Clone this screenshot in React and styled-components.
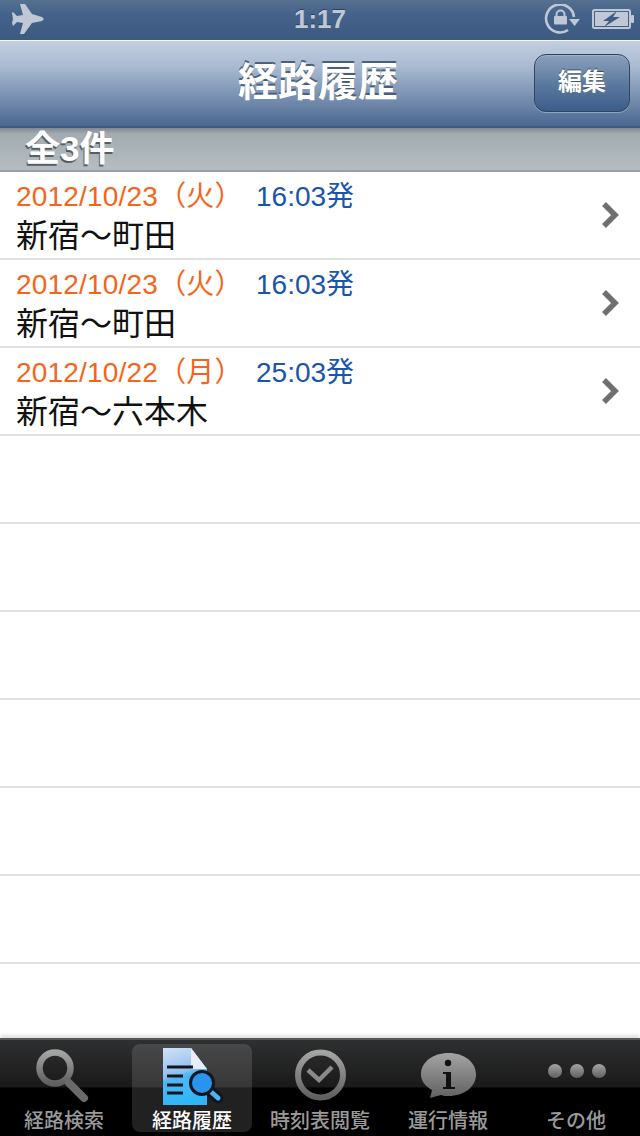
import React from 'react'
import styled, { createGlobalStyle } from 'styled-components'

const Global = createGlobalStyle`
  html, body { margin: 0; padding: 0; background: #fff; }
  body { font-family: "Liberation Sans", "Noto Sans CJK JP", sans-serif; }
`

const Phone = styled.div`
  width: 640px;
  height: 1136px;
  display: flex;
  flex-direction: column;
  overflow: hidden;
  background: #fff;
`

const StatusBar = styled.div`
  height: 40px;
  flex: none;
  display: flex;
  align-items: center;
  justify-content: space-between;
  padding: 0 6px 0 11px;
  background: linear-gradient(#56708f, #43618a 40%, #3d5a80);
  position: relative;
`

const Clock = styled.div`
  position: absolute;
  left: 0;
  right: 0;
  top: 3px;
  text-align: center;
  font-size: 26px;
  line-height: 32px;
  font-weight: 700;
  color: #bfc8d4;
  text-shadow: 0 -1px 0 #2b4262;
`

const StatusIcons = styled.div`
  display: flex;
  align-items: center;
  gap: 12px;
`

const Battery = styled.svg`
  margin-bottom: 2px;
`

const NavBar = styled.div`
  height: 88px;
  flex: none;
  box-sizing: border-box;
  border-top: 1px solid #f4f6f9;
  border-bottom: 2px solid #3f5a7f;
  display: flex;
  align-items: center;
  justify-content: center;
  position: relative;
  background: linear-gradient(#c2cfe1, #a9bad1 30%, #7089ab 72%, #4a6790);
`

const Title = styled.h1`
  margin: 0 4px 3px 0;
  font-size: 40px;
  line-height: 48px;
  font-weight: 700;
  color: #fff;
  text-shadow: 0 -2px 0 #4b5f7c;
`

const EditButton = styled.button`
  position: absolute;
  right: 10px;
  top: 13px;
  width: 96px;
  height: 58px;
  padding: 0 0 2px;
  box-sizing: border-box;
  border: 1px solid #2f4461;
  border-radius: 12px;
  font: 700 24px/30px "Liberation Sans", "Noto Sans CJK JP", sans-serif;
  color: #fff;
  text-shadow: 0 -1px 0 #38506f;
  background: linear-gradient(#8aa0ba, #5d7ba0 50%, #3c5c8a);
  box-shadow: 0 1px 0 rgba(255, 255, 255, 0.3), inset 0 1px 1px rgba(255, 255, 255, 0.2);
`

const SectionHeader = styled.div`
  height: 44px;
  flex: none;
  box-sizing: border-box;
  padding: 1px 0 0 25px;
  border-bottom: 2px solid #969ea6;
  background: linear-gradient(#7f898f, #a2abb0 14%, #b5bdc3);
  font-size: 35px;
  line-height: 40px;
  font-weight: 700;
  color: #fff;
  text-shadow: -1px 2px 0 #555e65;
`

const List = styled.div`
  flex: 1;
  min-height: 0;
  overflow: hidden;
`

const Row = styled.div`
  height: 88px;
  box-sizing: border-box;
  border-bottom: 2px solid #e0e0e0;
  padding: 7px 20px 0 16px;
  display: flex;
  align-items: center;
  justify-content: space-between;
`

const RowText = styled.div`
  display: flex;
  flex-direction: column;
  align-self: flex-start;
`

const WhenLine = styled.div`
  display: flex;
  font-size: 28px;
  line-height: 36px;
  white-space: nowrap;
`

const DateText = styled.span`
  color: #f4651a;
  width: 240px;
  letter-spacing: 0.2px;
`

const TimeText = styled.span`
  color: #1a55ab;
`

const RouteText = styled.div`
  font-size: 32px;
  line-height: 42px;
  color: #111;
  white-space: nowrap;
`

const Chevron = styled.svg`
  width: 20px;
  height: 28px;
  margin: 0 0 8px;
`

const TabBar = styled.div`
  height: 98px;
  flex: none;
  box-sizing: border-box;
  display: grid;
  grid-template-columns: repeat(5, 1fr);
  padding: 4px 0 4px;
  border-top: 2px solid #55585a;
  background: linear-gradient(#2e2f30, #1a1a1a 47px, #000 48px);
  box-shadow: 0 -4px 3px -1px rgba(0, 0, 0, 0.12);
`

const Tab = styled.div`
  display: flex;
  flex-direction: column;
  align-items: center;
  justify-content: space-between;
  border-radius: 8px;
  margin: 0 4px;
  background: ${p => (p.$active ? 'rgba(255,255,255,0.13)' : 'transparent')};
`

const TabIcon = styled.svg`
  width: 64px;
  height: 60px;
  margin-top: 2px;
  flex: none;
`

const TabLabel = styled.div`
  font-size: 20px;
  line-height: 24px;
  font-weight: 500;
  margin-bottom: -1px;
  white-space: nowrap;
  color: ${p => (p.$active ? '#fff' : '#9a9a9a')};
`

const rows = [
  { date: '2012/10/23（火）', time: '16:03発', route: '新宿〜町田' },
  { date: '2012/10/23（火）', time: '16:03発', route: '新宿〜町田' },
  { date: '2012/10/22（月）', time: '25:03発', route: '新宿〜六本木' },
  {}, {}, {}, {}, {}, {},
]

const Grad = ({ id }) => (
  <linearGradient id={id} x1="0" y1="0" x2="0" y2="1">
    <stop offset="0" stopColor="#a4a4a4" />
    <stop offset="1" stopColor="#606060" />
  </linearGradient>
)

const tabs = [
  {
    label: '経路検索',
    icon: (
      <>
        <defs><Grad id="g1" /></defs>
        <circle cx="23" cy="22" r="15.5" fill="none" stroke="url(#g1)" strokeWidth="6.5" />
        <path d="M37 37 L52 52" stroke="#6a6a6a" strokeWidth="8" strokeLinecap="round" />
      </>
    ),
  },
  {
    label: '経路履歴',
    active: true,
    icon: (
      <>
        <defs>
          <linearGradient id="doc" x1="0" y1="0" x2="0.25" y2="1">
            <stop offset="0" stopColor="#d3e1f6" />
            <stop offset="0.5" stopColor="#8fc0f0" />
            <stop offset="0.56" stopColor="#4fb9f5" />
            <stop offset="1" stopColor="#2fb6f9" />
          </linearGradient>
        </defs>
        <path d="M3 2 H31 L47 23 V59 H3 Z" fill="url(#doc)" />
        <path d="M31 2 L47 23 H31 Z" fill="#e8eef8" />
        <path d="M7 21 H33 M7 30 H23 M7 39 H23 M7 47 H23" stroke="#10161e" strokeWidth="3" />
        <path d="M49 44 L58 52" stroke="#10161e" strokeWidth="11" strokeLinecap="round" />
        <path d="M49 44 L58 52" stroke="#4fb3f0" strokeWidth="5" strokeLinecap="round" />
        <circle cx="42" cy="37" r="11.5" fill="#2a93ee" stroke="#10161e" strokeWidth="3" />
      </>
    ),
  },
  {
    label: '時刻表閲覧',
    icon: (
      <>
        <defs><Grad id="g3" /></defs>
        <circle cx="32.5" cy="29" r="22.5" fill="none" stroke="url(#g3)" strokeWidth="6" />
        <path d="M20 24 L31 34 L44 21" fill="none" stroke="#8a8a8a" strokeWidth="4.5" />
      </>
    ),
  },
  {
    label: '運行情報',
    icon: (
      <>
        <defs><Grad id="g4" /></defs>
        <path d="M32.5 7 C17 7 5 16 5 28.5 C5 35 9 40 16 44 L14 52 L25 49 C27 50 30 50 32.5 50 C48 50 60 41 60 28.5 C60 16 48 7 32.5 7 Z" fill="url(#g4)" />
        <circle cx="32" cy="17" r="3.2" fill="#111" />
        <path d="M27 26 H35 V41 H39 V43 H27 V41 H30 V28 H27 Z" fill="#111" />
      </>
    ),
  },
  {
    label: 'その他',
    icon: (
      <>
        <defs><Grad id="g5" /></defs>
        <circle cx="11" cy="25" r="7" fill="url(#g5)" />
        <circle cx="33" cy="25" r="7" fill="url(#g5)" />
        <circle cx="55" cy="25" r="7" fill="url(#g5)" />
      </>
    ),
  },
]

export default function App() {
  return (
    <Phone>
      <Global />
      <StatusBar>
        <svg width="34" height="32" viewBox="11 4 34 32">
          <path d="M20 4 L25 4 L32 14 L42 17 L44 19 L42 21 L32 23 L24 34 L20 34 L23 23 L17 22 L13 26 L12 23 L13 19 L12 13 L13 12 L17 16 L23 15 Z" fill="#bfc8d4" />
        </svg>
        <Clock>1:17</Clock>
        <StatusIcons>
          <svg width="36" height="32" viewBox="544 4 36 32">
            <path d="M568 30 A14 14 0 1 1 574 17" fill="none" stroke="#bfc8d4" strokeWidth="2.6" />
            <path d="M569 19 H580 L574.5 26 Z" fill="#bfc8d4" />
            <rect x="554" y="16" width="13" height="8.5" rx="1" fill="#bfc8d4" />
            <path d="M556.5 16 V14.5 A4 4 0 0 1 564.5 14.5 V16" fill="none" stroke="#bfc8d4" strokeWidth="2" />
          </svg>
          <Battery width="42" height="20" viewBox="592 9 42 20">
            <rect x="593" y="10" width="37" height="18" rx="1.5" fill="none" stroke="#bfc8d4" strokeWidth="2" />
            <rect x="595" y="12" width="33" height="14" fill="#bfc8d4" />
            <rect x="631" y="15" width="3" height="8" rx="1" fill="#bfc8d4" />
            <path d="M617 11 L603 21 H609 L604 27 L620 17 H613 Z" fill="#3f5c82" />
          </Battery>
        </StatusIcons>
      </StatusBar>
      <NavBar>
        <Title>経路履歴</Title>
        <EditButton>編集</EditButton>
      </NavBar>
      <SectionHeader>全3件</SectionHeader>
      <List>
        {rows.map((r, i) => (
          <Row key={i}>
            {r.date && (
              <>
                <RowText>
                  <WhenLine>
                    <DateText>{r.date}</DateText>
                    <TimeText>{r.time}</TimeText>
                  </WhenLine>
                  <RouteText>{r.route}</RouteText>
                </RowText>
                <Chevron viewBox="0 0 20 28">
                  <path d="M4 3 L15 14 L4 25" fill="none" stroke="#6f6f6f" strokeWidth="5.5" />
                </Chevron>
              </>
            )}
          </Row>
        ))}
      </List>
      <TabBar>
        {tabs.map(t => (
          <Tab key={t.label} $active={t.active}>
            <TabIcon viewBox="0 0 64 60">{t.icon}</TabIcon>
            <TabLabel $active={t.active}>{t.label}</TabLabel>
          </Tab>
        ))}
      </TabBar>
    </Phone>
  )
}
